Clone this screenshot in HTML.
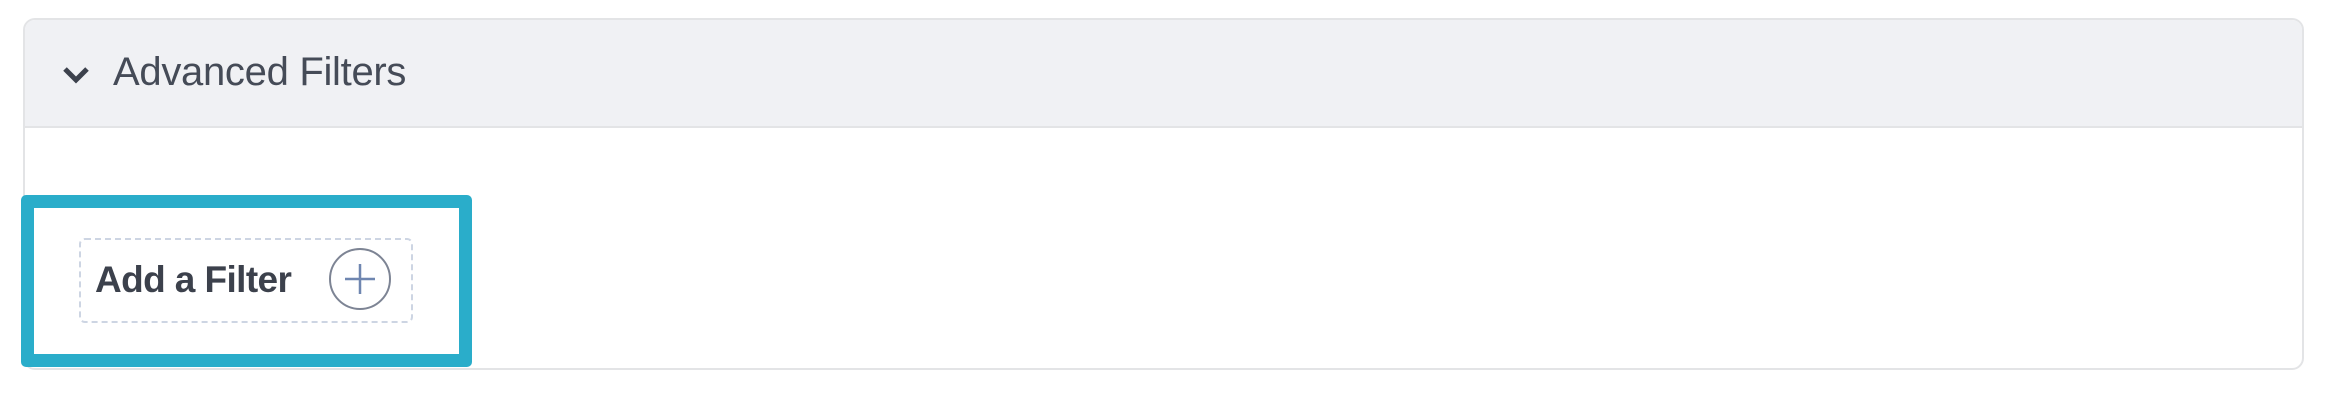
<!DOCTYPE html>
<html><head><style>
body{margin:0;width:2330px;height:404px;background:#fff;position:relative;overflow:hidden;font-family:"Liberation Sans",sans-serif;}
.panel{position:absolute;left:23px;top:18px;width:2281px;height:352px;border:2px solid #e3e4e6;border-radius:12px;box-sizing:border-box;overflow:hidden;}
.head{position:absolute;left:0;top:0;right:0;height:106px;background:#f0f1f4;border-bottom:2px solid #e3e4e6;}
.title{position:absolute;left:88px;top:30px;font-size:40px;color:#454b57;letter-spacing:-0.3px;}
.blue{position:absolute;left:21px;top:195px;width:451px;height:172px;border:13px solid #2aadca;border-radius:5px;box-sizing:border-box;background:#fff;}
.dash{position:absolute;left:79px;top:238px;width:334px;height:85px;border:2px dashed #cdd5e3;border-radius:6px;box-sizing:border-box;}
.add{position:absolute;left:95px;top:259px;font-size:37px;font-weight:bold;color:#3c414c;letter-spacing:-0.6px;}
</style></head><body>
<div class="panel"><div class="head">
<svg style="position:absolute;left:36px;top:44px" width="30" height="22" viewBox="0 0 30 22"><path d="M4 5 L15 16 L26 5" fill="none" stroke="#3c414c" stroke-width="5"/></svg>
<div class="title">Advanced Filters</div></div></div>
<div class="blue"></div>
<div class="dash"></div>
<div class="add">Add a Filter</div>
<svg style="position:absolute;left:328px;top:247px" width="64" height="64" viewBox="0 0 64 64"><circle cx="32" cy="32" r="30" fill="none" stroke="#7d8494" stroke-width="2"/><path d="M32 17V47M17 32H47" stroke="#6f86b0" stroke-width="2.5"/></svg>
</body></html>
